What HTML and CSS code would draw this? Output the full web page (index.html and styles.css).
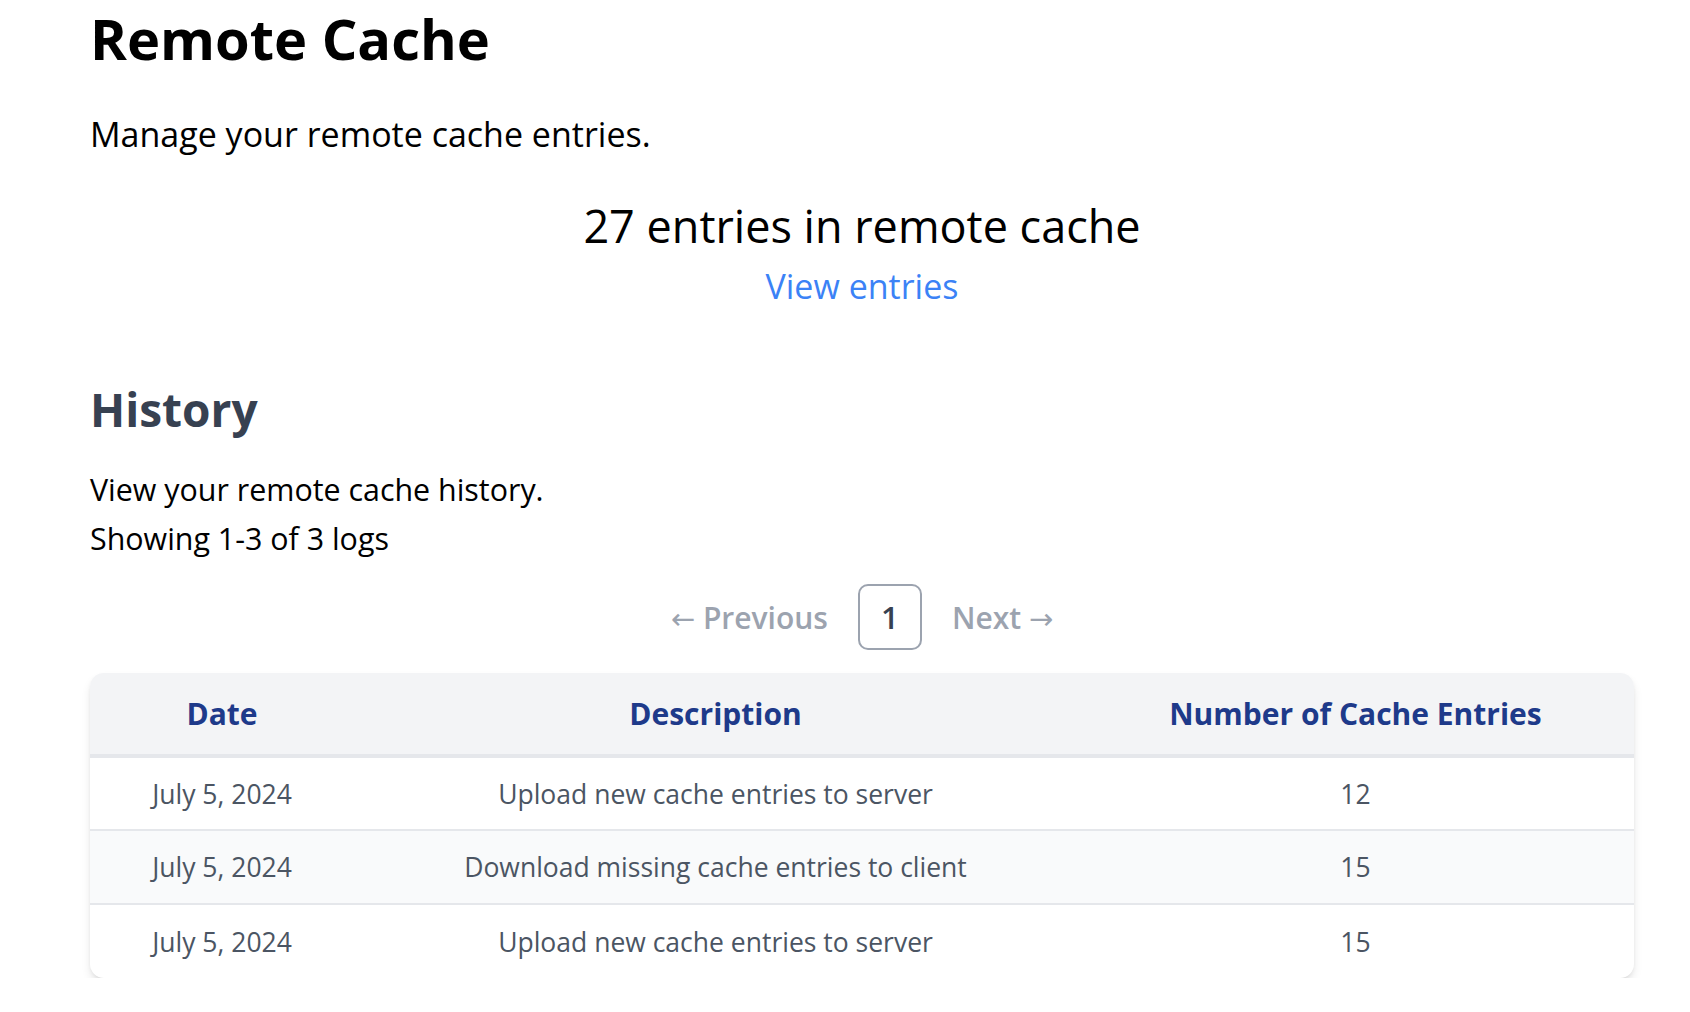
FILE: index.html
```html
<!DOCTYPE html>
<html lang="en">
<head>
<meta charset="utf-8">
<title>Remote Cache</title>
<link rel="stylesheet" href="styles.css">
</head>
<body>
<main class="page">
  <h1 class="title">Remote Cache</h1>
  <p class="lead">Manage your remote cache entries.</p>

  <section class="summary">
    <div class="summary-count">27 entries in remote cache</div>
    <a class="summary-link" href="#">View entries</a>
  </section>

  <section class="history">
    <h2 class="history-title">History</h2>
    <p class="text">View your remote cache history.</p>
    <p class="text">Showing 1-3 of 3 logs</p>

    <nav class="pager">
      <span class="pager-link"><span class="arrow">←</span> Previous</span>
      <span class="pager-page">1</span>
      <span class="pager-link">Next <span class="arrow">→</span></span>
    </nav>

    <div class="card">
      <table class="log-table">
        <colgroup>
          <col class="col-date">
          <col class="col-desc">
          <col class="col-num">
        </colgroup>
        <thead>
          <tr>
            <th>Date</th>
            <th>Description</th>
            <th>Number of Cache Entries</th>
          </tr>
        </thead>
        <tbody>
          <tr>
            <td>July 5, 2024</td>
            <td>Upload new cache entries to server</td>
            <td>12</td>
          </tr>
          <tr class="alt">
            <td>July 5, 2024</td>
            <td>Download missing cache entries to client</td>
            <td>15</td>
          </tr>
          <tr>
            <td>July 5, 2024</td>
            <td>Upload new cache entries to server</td>
            <td>15</td>
          </tr>
        </tbody>
      </table>
    </div>
  </section>
</main>
</body>
</html>
```

FILE: styles.css
```css
* { box-sizing: border-box; }

html, body {
  margin: 0;
  padding: 0;
  background: #ffffff;
}

body {
  font-family: "Open Sans", "Noto Sans", "Liberation Sans", sans-serif;
  color: #000000;
}

.page {
  padding: 5px 56px 0 90px;
}

.title {
  margin: 0;
  font-size: 56px;
  line-height: 67px;
  font-weight: 700;
  color: #000000;
}

.lead {
  margin: 38px 0 0;
  font-size: 34px;
  line-height: 49px;
}

.summary {
  margin-top: 38px;
  display: flex;
  flex-direction: column;
  align-items: center;
}

.summary-count {
  font-size: 45px;
  line-height: 58px;
}

.summary-link {
  margin-top: 6px;
  font-size: 34px;
  line-height: 51px;
  color: #3b82f6;
  text-decoration: none;
}

.history {
  margin-top: 66px;
}

.history-title {
  margin: 0 0 25px;
  font-size: 46px;
  line-height: 62px;
  font-weight: 700;
  color: #374151;
}

.text {
  margin: 0;
  font-size: 30.4px;
  line-height: 49px;
}

.pager {
  margin-top: 21px;
  display: flex;
  justify-content: center;
  align-items: center;
  gap: 30px;
}

.pager-link {
  font-size: 30px;
  font-weight: 600;
  color: #9ca3af;
}

.arrow {
  font-family: "DejaVu Sans", sans-serif;
  font-weight: 400;
  font-size: 29px;
}

.pager-page {
  width: 64px;
  height: 66px;
  display: flex;
  align-items: center;
  justify-content: center;
  border: 2px solid #9ca3af;
  border-radius: 10px;
  font-size: 31px;
  font-weight: 600;
  color: #374151;
}

.card {
  margin-top: 23px;
  border-radius: 14px;
  overflow: hidden;
  background: #ffffff;
  box-shadow: 0 6px 12px -3px rgba(0, 0, 0, 0.16), 0 2px 5px -2px rgba(0, 0, 0, 0.1);
}

.log-table {
  width: 100%;
  border-collapse: collapse;
  table-layout: fixed;
}

.col-date { width: 264px; }
.col-desc { width: 723px; }
.col-num { width: 557px; }

.log-table th {
  height: 83px;
  padding: 0;
  background: #f3f4f6;
  border-bottom: 4px solid #e5e7eb;
  font-size: 30px;
  font-weight: 700;
  color: #1e3a8a;
  text-align: center;
}

.log-table td {
  height: 74px;
  padding: 0;
  font-size: 26.5px;
  color: #4b5563;
  text-align: center;
  border-bottom: 2px solid #e5e7eb;
}

.log-table tbody tr:last-child td {
  border-bottom: none;
}

.log-table tr.alt td {
  background: #f9fafb;
}
```
